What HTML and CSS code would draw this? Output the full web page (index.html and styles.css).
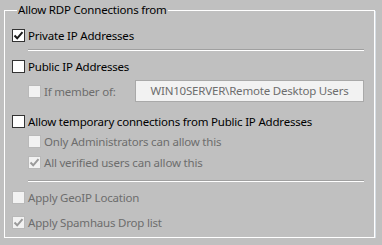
FILE: index.html
```html
<!DOCTYPE html>
<html lang="en">

<head>
    <meta charset="UTF-8">
    <title>Allow RDP Connections</title>
    <link rel="stylesheet" href="styles.css">
</head>

<body>
    <fieldset class="group">
        <legend>Allow RDP Connections from</legend>

        <div class="row r-private">
            <span class="box"><svg viewBox="0 0 11 11"><polyline points="1.5,5.5 4.2,8.3 9.5,2.2" /></svg></span>
            <span class="label">Private IP Addresses</span>
        </div>
        <div class="sep s-first"></div>

        <div class="row r-public">
            <span class="box"></span>
            <span class="label">Public IP Addresses</span>
        </div>
        <div class="row sub r-member disabled">
            <span class="box"></span>
            <span class="label member">If member of:</span>
            <div class="textbox">WIN10SERVER\Remote Desktop Users</div>
        </div>

        <div class="row r-temp">
            <span class="box"></span>
            <span class="label">Allow temporary connections from Public IP Addresses</span>
        </div>
        <div class="row sub r-admins disabled">
            <span class="box"></span>
            <span class="label">Only Administrators can allow this</span>
        </div>
        <div class="row sub r-verified disabled">
            <span class="box"><svg viewBox="0 0 11 11"><polyline points="1.5,5.5 4.2,8.3 9.5,2.2" /></svg></span>
            <span class="label">All verified users can allow this</span>
        </div>
        <div class="sep s-second"></div>

        <div class="row r-geoip disabled">
            <span class="box"></span>
            <span class="label">Apply GeoIP Location</span>
        </div>
        <div class="row r-spamhaus disabled">
            <span class="box"><svg viewBox="0 0 11 11"><polyline points="1.5,5.5 4.2,8.3 9.5,2.2" /></svg></span>
            <span class="label">Apply Spamhaus Drop list</span>
        </div>
    </fieldset>
</body>

</html>
```
FILE: styles.css
```css
body {
    margin: 0;
    padding: 2px 0 0 4px;
    background-color: #c0c0c0;
    font-family: "Noto Sans", "Open Sans", sans-serif;
    font-size: 11.5px;
    letter-spacing: -0.2px;
    color: #000;
}

.group {
    box-sizing: border-box;
    margin: 0;
    padding: 0 10px 5px 7px;
    width: 371px;
    border: 1px solid #fff;
    box-shadow: 1px 1px 0 #d6dde4;
    display: flex;
    flex-direction: column;
}

.group legend {
    padding: 0 1px;
    margin-left: 5px;
    line-height: 16px;
}

.row {
    display: flex;
    align-items: center;
    height: 20px;
    flex: none;
}

.sub {
    padding-left: 16px;
}

.box {
    width: 11px;
    height: 11px;
    border: 1px solid #333;
    background-color: #fff;
    display: flex;
    align-items: center;
    justify-content: center;
    flex: none;
}

.box svg {
    width: 11px;
    height: 11px;
    fill: none;
    stroke: #1a1a1a;
    stroke-width: 2;
}

.label {
    margin-left: 3px;
    white-space: nowrap;
}

.disabled {
    color: #6d6d6d;
}

.disabled .box {
    border-color: #b9b9b9;
    background-color: #f2f2f2;
}

.disabled .box svg {
    stroke: #9a9a9a;
}

.member {
    width: 91px;
}

.textbox {
    width: 227px;
    height: 20px;
    line-height: 20px;
    border: 1px solid #a9a9a9;
    background-color: #f2f2f2;
    text-align: center;
}

.sep {
    flex: none;
    height: 0;
    margin-left: 16px;
    border-top: 1px solid #a0a0a0;
    border-bottom: 1px solid #fff;
}

.r-private { margin-top: 7px; }
.s-first { margin-top: 4px; }
.r-public { margin-top: 5px; }
.r-member { margin-top: 4px; height: 22px; }
.r-temp { margin-top: 9px; }
.r-verified { margin-top: 1px; }
.s-second { margin-top: 8px; }
.r-geoip { margin-top: 5px; }
.r-spamhaus { margin-top: 5px; }
```
